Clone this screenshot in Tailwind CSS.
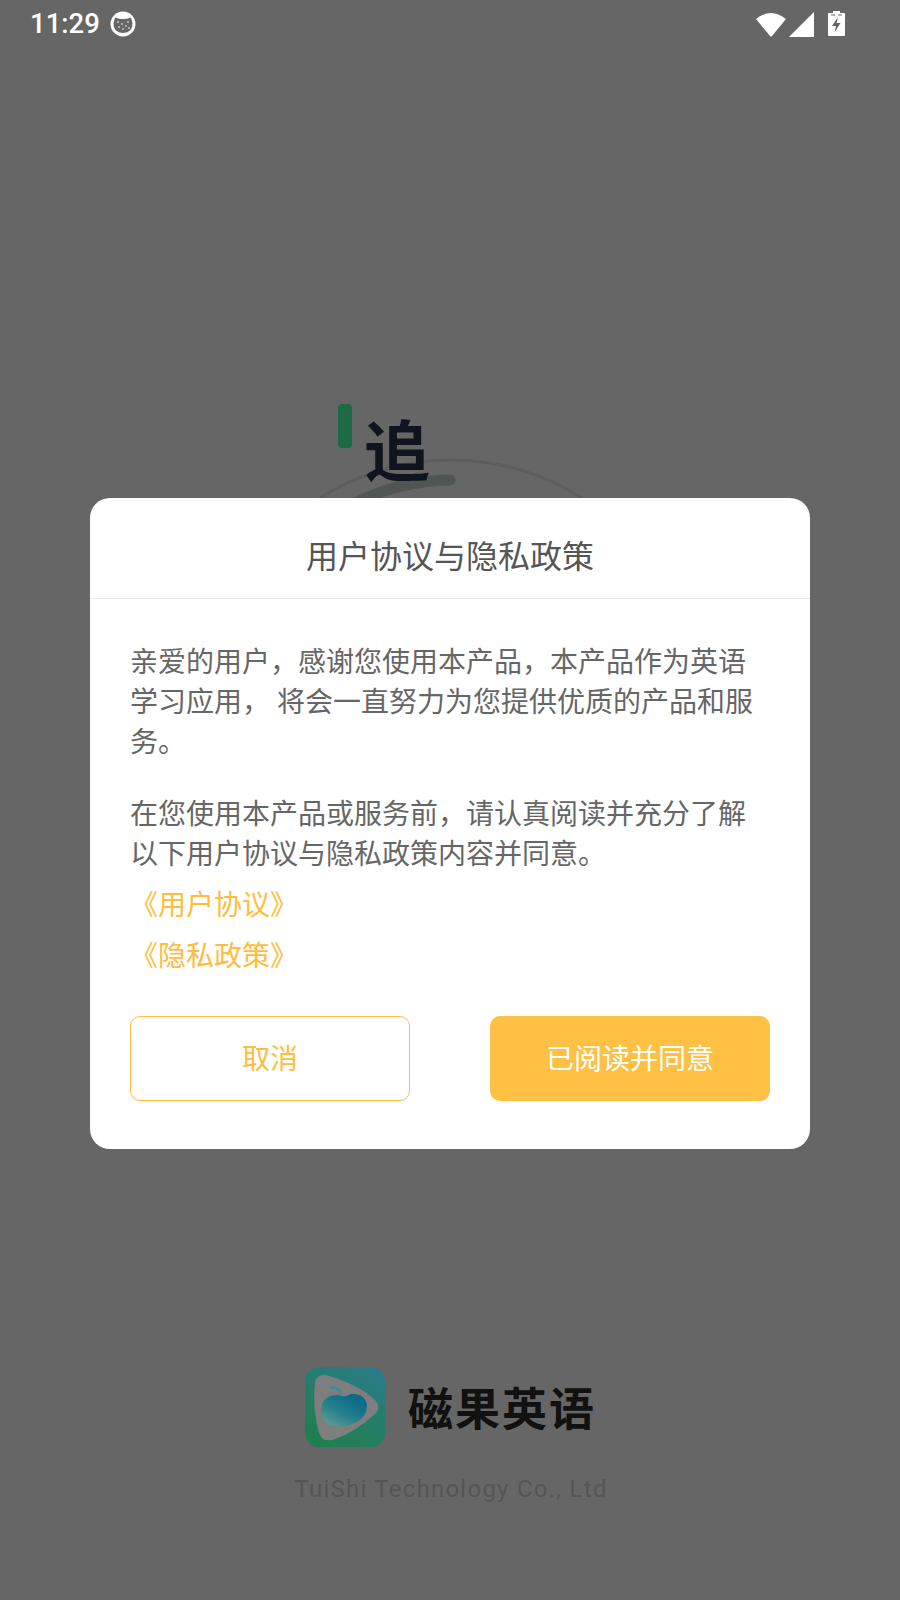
<!DOCTYPE html>
<html lang="zh-CN">
<head>
    <meta charset="UTF-8">
    <meta name="viewport" content="width=device-width, initial-scale=1.0">
    <title>磁果英语</title>
    <script src="https://cdn.jsdelivr.net/npm/@tailwindcss/browser@4"></script>
</head>
<body class="m-0">
    <div class="relative w-[900px] h-[1600px] overflow-hidden bg-[#666666] font-['Roboto','Noto_Sans_CJK_SC',sans-serif]">
        <!-- Status bar -->
        <div class="flex items-center justify-between h-[48px] pl-[30px] pr-[55px] text-white">
            <div class="flex items-center gap-[10px]">
                <span class="text-[27.5px] leading-[46px] font-medium">11:29</span>
                <svg class="w-[26px] h-[26px]" viewBox="0 0 26 26">
                    <circle cx="13" cy="13" r="12.500" fill="#fff"/>
                    <path d="M3.500 12 L5 6.500 Q13 9.500 21 6.500 L22.500 12 Q23 21.500 13 22 Q3 21.500 3.500 12Z" fill="#666"/>
                    <g fill="#fff">
                        <circle cx="8" cy="11" r="0.800"/>
                        <circle cx="12" cy="13" r="0.800"/>
                        <circle cx="18" cy="11" r="0.800"/>
                        <circle cx="16" cy="15" r="0.800"/>
                        <circle cx="9" cy="16" r="0.800"/>
                        <circle cx="13" cy="18" r="0.800"/>
                        <circle cx="19" cy="17" r="0.800"/>
                    </g>
                </svg>
            </div>
            <div class="flex items-center">
                <svg class="w-[30px] h-[26px]" viewBox="0 0 30 26"><path d="M0 8 Q15 -4 30 8 L16 25 Q15 26 14 25Z" fill="#fff"/></svg>
                <svg class="ml-[3px] w-[26px] h-[26px]" viewBox="0 0 26 26"><path d="M0 26 L25 1 V26Z" fill="#fff"/></svg>
                <svg class="ml-[13px] -mt-[2px] w-[17px] h-[25px]" viewBox="0 0 17 25">
                    <path d="M5 0 H12 V2 H16 Q17 2 17 3 V24 Q17 25 16 25 H1 Q0 25 0 24 V3 Q0 2 1 2 H5Z" fill="#fff"/>
                    <path d="M3 3.500 H7 V4.500 H3Z M10 3.500 H14 V4.500 H10Z" fill="#666"/>
                    <path d="M10 6 L4 15 H8 L6.500 21.500 L12.500 12 H8.500Z" fill="#666"/>
                </svg>
            </div>
        </div>

        <!-- Splash behind the dialog -->
        <svg class="absolute left-[300px] top-[450px] w-[300px] h-[60px]" viewBox="0 0 300 60">
            <path d="M20 48 A245 245 0 0 1 282 48" fill="none" stroke="#5d5d5d" stroke-width="3"/>
            <path d="M50 56 Q95 31 150 30" fill="none" stroke="#4f5653" stroke-width="11" stroke-linecap="round"/>
        </svg>
        <div class="absolute left-[338px] top-[404px] w-[14px] h-[44px] rounded-[4px] bg-[#1c6b45]"></div>
        <div class="absolute left-[364px] top-[410px] text-[66px] leading-[88px] font-bold text-[#10141f]">追</div>

        <!-- Dialog -->
        <div class="absolute left-[90px] top-[498px] w-[720px] h-[651px] rounded-[20px] bg-white">
            <div class="h-[101px] pt-[18px] border-b border-[#e8e8e8] flex items-center justify-center text-[32px] text-[#555555]">用户协议与隐私政策</div>
            <div class="px-[40px] pt-[44px] text-[28px] leading-[40px] text-[#666666]">
                <p>亲爱的用户，感谢您使用本产品，本产品作为英语<br>学习应用， 将会一直努力为您提供优质的产品和服<br>务。</p>
                <p class="mt-[32px]">在您使用本产品或服务前，请认真阅读并充分了解<br>以下用户协议与隐私政策内容并同意。</p>
                <p class="mt-[11px] text-[#ffbc3e]">《用户协议》</p>
                <p class="mt-[11px] text-[#ffbc3e]">《隐私政策》</p>
                <div class="flex justify-between mt-[39px]">
                    <button class="w-[280px] h-[85px] pt-[3px] rounded-[10px] border border-[#ffbc3e] bg-white text-[#ffbc3e]">取消</button>
                    <button class="w-[280px] h-[85px] pt-[3px] rounded-[10px] bg-[#ffc043] text-white">已阅读并同意</button>
                </div>
            </div>
        </div>

        <!-- Brand -->
        <div class="absolute left-[305px] top-[1367px] flex items-center gap-[23px]">
            <svg class="w-[80px] h-[80px]" viewBox="0 0 80 80">
                <defs>
                    <linearGradient id="tile" x1="0.2" y1="1" x2="0.8" y2="0">
                        <stop offset="0" stop-color="#1f7f4c"/>
                        <stop offset="1" stop-color="#2a7c86"/>
                    </linearGradient>
                    <linearGradient id="apple" x1="0.2" y1="1" x2="0.8" y2="0.2">
                        <stop offset="0" stop-color="#5f9c90"/>
                        <stop offset="0.5" stop-color="#257f8c"/>
                        <stop offset="1" stop-color="#0b6b8d"/>
                    </linearGradient>
                </defs>
                <rect width="80" height="80" rx="14" fill="url(#tile)"/>
                <path d="M10 16 Q11 7 21 8 Q55 18 70 33 Q76 39 71 46 Q50 66 27 73 Q17 75 14 66 Q7 40 10 16Z" fill="#7e7e7e"/>
                <path d="M16 42 Q18 27 34 28 Q40 31 46 27 Q60 26 62 38 Q62 50 50 56 Q36 62 24 58 Q15 52 16 42Z" fill="url(#apple)"/>
                <path d="M25 21 Q32 19 36 26" fill="none" stroke="#3a8d9a" stroke-width="3"/>
            </svg>
            <span class="relative top-[4px] text-[45px] leading-[60px] font-bold tracking-[2px] text-[#111111]">磁果英语</span>
        </div>
        <div class="absolute left-[1px] top-[1473px] w-[900px] text-center text-[24px] leading-[32px] tracking-[1.25px] text-[#555555]">TuiShi Technology Co., Ltd</div>
    </div>
</body>
</html>
